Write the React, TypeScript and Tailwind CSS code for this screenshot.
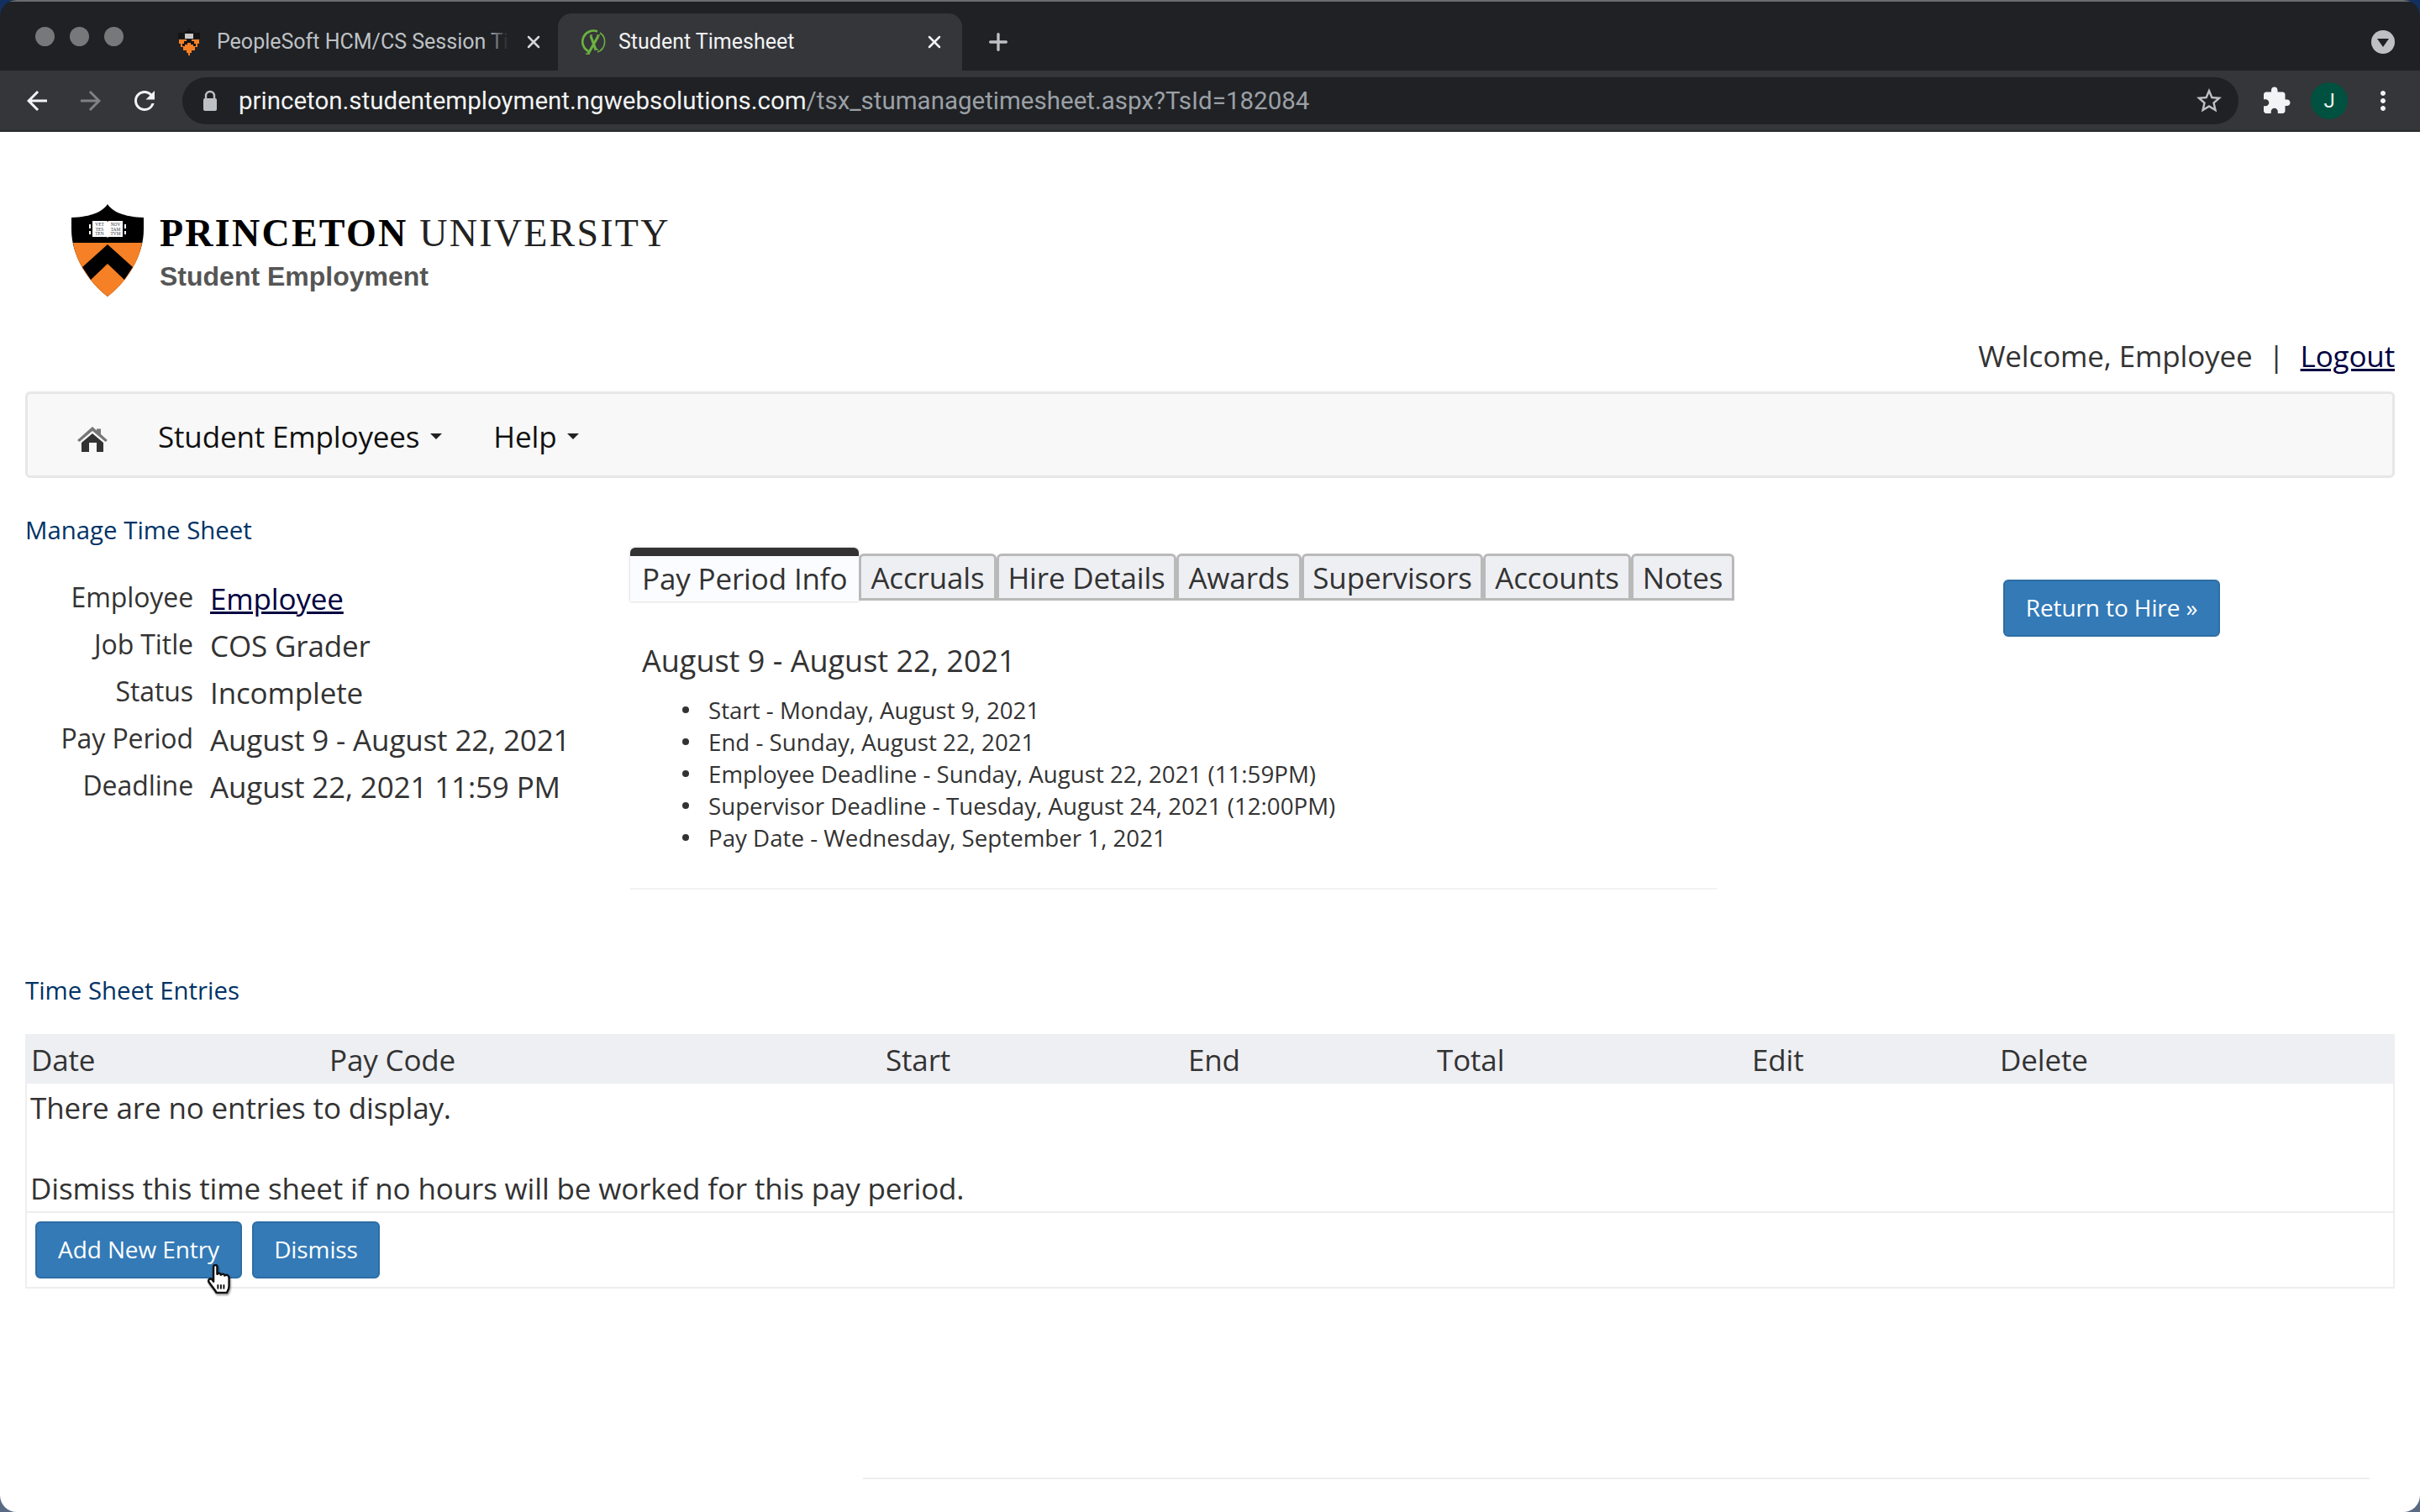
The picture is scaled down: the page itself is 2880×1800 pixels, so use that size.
import { Plus, X } from "lucide-react";

const tabs = [
  { label: "Accruals", w: "w-[164px]" },
  { label: "Hire Details", w: "w-[214px]" },
  { label: "Awards", w: "w-[149px]" },
  { label: "Supervisors", w: "w-[216px]" },
  { label: "Accounts", w: "w-[176px]" },
  { label: "Notes", w: "w-[123px]" },
];

const details = [
  ["Employee", "Employee"],
  ["Job Title", "COS Grader"],
  ["Status", "Incomplete"],
  ["Pay Period", "August 9 - August 22, 2021"],
  ["Deadline", "August 22, 2021 11:59 PM"],
];

const dates = [
  "Start - Monday, August 9, 2021",
  "End - Sunday, August 22, 2021",
  "Employee Deadline - Sunday, August 22, 2021 (11:59PM)",
  "Supervisor Deadline - Tuesday, August 24, 2021 (12:00PM)",
  "Pay Date - Wednesday, September 1, 2021",
];

const columns = [
  { label: "Date", w: "w-[355px]" },
  { label: "Pay Code", w: "w-[662px]" },
  { label: "Start", w: "w-[360px]" },
  { label: "End", w: "w-[296px]" },
  { label: "Total", w: "w-[375px]" },
  { label: "Edit", w: "w-[295px]" },
  { label: "Delete", w: "w-[300px]" },
];

const Shield = () => (
  <svg width="86" height="110" viewBox="0 0 86 110" className="shrink-0">
    <path d="M43 0 C48 8 60 15 86 16 L86 30 C86 62 66 92 43 110 C20 92 0 62 0 30 L0 16 C26 15 38 8 43 0Z" fill="#000" />
    <path d="M2 46 L84 46 C80 70 64 94 43 110 C22 94 6 70 2 46Z" fill="#f58025" />
    <path d="M43 48 L73 75 L63 90 L43 71 L23 90 L13 75Z" fill="#000" />
    <path d="M25 20 L42 20 L43 21 L44 20 L61 20 L61 39 L44 39 L43 40 L42 39 L25 39Z" fill="#fff" />
    <path d="M22 24V29M22 32V36M64 24V29M64 32V36" stroke="#fff" strokeWidth="2" />
    <text x="33.5" y="26" textAnchor="middle" fontSize="5.4" fontFamily="Liberation Serif, serif" fill="#333">VET</text>
    <text x="33.5" y="31.5" textAnchor="middle" fontSize="5.4" fontFamily="Liberation Serif, serif" fill="#333">TES</text>
    <text x="33.5" y="37" textAnchor="middle" fontSize="5.4" fontFamily="Liberation Serif, serif" fill="#333">TEN</text>
    <text x="52.5" y="26" textAnchor="middle" fontSize="5.4" fontFamily="Liberation Serif, serif" fill="#333">NOV</text>
    <text x="52.5" y="31.5" textAnchor="middle" fontSize="5.4" fontFamily="Liberation Serif, serif" fill="#333">TAM</text>
    <text x="52.5" y="37" textAnchor="middle" fontSize="5.4" fontFamily="Liberation Serif, serif" fill="#333">TVM</text>
  </svg>
);

const TimesheetFavicon = () => (
  <svg width="30" height="32" viewBox="0 0 30 32" className="shrink-0">
    <path d="M19 3.5 A13 13 0 0 0 8 27" fill="none" stroke="#6cb33f" strokeWidth="2.6" />
    <path d="M22 5 A13 13 0 0 1 19 28" fill="none" stroke="#6cb33f" strokeWidth="1.6" />
    <path d="M11 9 L17 25 M20 9 L8 30" stroke="#6cb33f" strokeWidth="3" fill="none" />
    <path d="M10 8 H13 M18 8 H22 M5 30 H10 M15 25 H20" stroke="#6cb33f" strokeWidth="1.4" />
  </svg>
);

const PeopleSoftFavicon = () => (
  <svg width="26" height="32" viewBox="0 0 26 32" className="shrink-0" shapeRendering="crispEdges">
    <path d="M12 0 H14 V3 H18 V5 H26 V12 H0 V5 H8 V3 H12Z" fill="#141414" />
    <rect x="8" y="6" width="10" height="6" fill="#c9c9c9" />
    <path d="M1 13 H25 V18 H23 V22 H20 V26 H16 V29 H14 V32 H12 V29 H10 V26 H6 V22 H3 V18 H1Z" fill="#f58025" />
    <path d="M10 13 H16 V15 H19 V18 H21 V21 H18 V19 H15 V17 H11 V19 H8 V21 H5 V18 H7 V15 H10Z" fill="#141414" />
  </svg>
);

const HomeIcon = () => (
  <svg width="36" height="30" viewBox="0 0 36 30">
    <path d="M18 0 L23 4.5 L23 2.5 L28 2.5 L28 9 L36 16 L33.5 18 L18 5 L2.5 18 L0 16Z" fill="#777" />
    <path d="M18 8 L31 19 L31 30 L23 30 L23 19 L14 19 L14 30 L5 30 L5 19Z" fill="#333" />
  </svg>
);

const HandCursor = () => (
  <svg
    width="30"
    height="36"
    viewBox="0 0 34 40"
    className="absolute left-[247px] top-[1505px] drop-shadow-[1px_2px_1px_rgba(0,0,0,0.4)]"
  >
    <path
      d="M8 3 C8 0 13 0 13 3 L13 13 C15 11 18 12 18 14 C20 12 23 13 23 15 C26 13 29 15 29 18 L29 29 C29 33 27 36 26 38 L12 38 C10 34 6 30 2 24 C0 21 3 18 6 20 L8 23Z"
      fill="#fff"
      stroke="#111"
      strokeWidth="2.8"
      strokeLinejoin="round"
    />
    <path d="M14 27 L14 33 M18 27 L18 33 M22 27 L22 33" stroke="#111" strokeWidth="2.2" />
  </svg>
);

// Material paths, the same ones the browser toolbar draws
const ToolbarIcon = ({ d, size, className }: { d: string; size: number; className: string }) => (
  <svg width={size} height={size} viewBox="0 0 24 24" fill="currentColor" className={`shrink-0 ${className}`}>
    <path d={d} />
  </svg>
);

const BlueButton = ({ children, className }: { children: React.ReactNode; className: string }) => (
  <button className={`flex h-[68px] items-center justify-center rounded-[6px] border-2 border-[#2e6da4] bg-[#337ab7] pb-[2px] text-[28px] tracking-[-0.1px] text-white ${className}`}>
    {children}
  </button>
);

const BrowserChrome = () => (
  <div className="h-[157px] overflow-hidden rounded-t-[20px] bg-[#202124] font-['Roboto',sans-serif]">
    <div className="h-[2px] bg-[#6b6c6e]" />
    <div className="flex h-[82px] items-end">
      <div className="flex h-[68px] w-[212px] items-center pb-[14px] pl-[42px]">
        <span className="size-[23px] rounded-full bg-[#77787a]" />
        <span className="ml-[18px] size-[23px] rounded-full bg-[#77787a]" />
        <span className="ml-[18px] size-[23px] rounded-full bg-[#77787a]" />
      </div>
      <div className="flex h-[68px] w-[452px] items-center text-[25px] text-[#bdc1c6]">
        <PeopleSoftFavicon />
        <span className="relative ml-[20px] w-[347px] overflow-hidden whitespace-nowrap">
          PeopleSoft HCM/CS Session Ti
          <span className="absolute inset-y-0 right-0 w-[26px] bg-linear-to-r from-transparent to-[#202124]" />
        </span>
        <X size={24} strokeWidth={2.5} className="ml-[18px] text-[#d5d7da]" />
      </div>
      <div className="flex h-[68px] w-[481px] items-center rounded-t-[16px] bg-[#35363a] pl-[28px] text-[25px] text-[#f1f3f4]">
        <TimesheetFavicon />
        <span className="ml-[14px] w-[364px]">Student Timesheet</span>
        <X size={24} strokeWidth={2.5} className="text-[#f1f3f4]" />
      </div>
      <Plus size={32} strokeWidth={2.5} className="mb-[18px] ml-[27px] text-[#bdc1c6]" />
      <div className="mb-[20px] ml-auto mr-[30px] flex size-[28px] items-center justify-center rounded-full bg-[#bdc1c6]">
        <span className="mt-[2px] size-0 border-x-[7px] border-t-[10px] border-x-transparent border-t-[#202124]" />
      </div>
    </div>
    <div className="flex h-[73px] items-center border-b-[2px] border-[#2a2b2e] bg-[#35363a]">
      <ToolbarIcon size={36} className="ml-[26px] text-[#f1f3f4]" d="M20 11H7.83l5.59-5.59L12 4l-8 8 8 8 1.41-1.41L7.83 13H20v-2z" />
      <ToolbarIcon size={36} className="ml-[28px] rotate-180 text-[#7f8184]" d="M20 11H7.83l5.59-5.59L12 4l-8 8 8 8 1.41-1.41L7.83 13H20v-2z" />
      <ToolbarIcon
        size={36}
        className="ml-[28px] text-[#f1f3f4]"
        d="M17.65 6.35A7.958 7.958 0 0 0 12 4c-4.42 0-7.99 3.58-7.99 8s3.57 8 7.99 8c3.73 0 6.84-2.55 7.73-6h-2.08A5.99 5.99 0 0 1 12 18c-3.31 0-6-2.69-6-6s2.69-6 6-6c1.66 0 3.14.69 4.22 1.78L13 11h7V4l-2.35 2.35z"
      />
      <div className="ml-[27px] flex h-[56px] w-[2447px] shrink-0 items-center rounded-full bg-[#202124] pl-[23px] pr-[17px]">
        <svg width="20" height="26" viewBox="0 0 20 26" className="shrink-0">
          <path d="M5 11 V7 A5 5 0 0 1 15 7 V11" fill="none" stroke="#bdc1c6" strokeWidth="2.4" />
          <rect x="2" y="10" width="16" height="15" rx="2" fill="#bdc1c6" />
        </svg>
        <span className="ml-[24px] mt-[2px] whitespace-nowrap text-[29.5px] text-[#f1f3f4]">
          princeton.studentemployment.ngwebsolutions.com
          <span className="text-[#9aa0a6]">/tsx_stumanagetimesheet.aspx?TsId=182084</span>
        </span>
        <ToolbarIcon
          size={36}
          className="ml-auto text-[#bdc1c6]"
          d="M22 9.24l-7.19-.62L12 2 9.19 8.63 2 9.24l5.46 4.73L5.82 21 12 17.27 18.18 21l-1.63-7.03L22 9.24zM12 15.4l-3.76 2.27 1-4.28-3.32-2.88 4.38-.38L12 6.1l1.71 4.04 4.38.38-3.32 2.88 1 4.28L12 15.4z"
        />
      </div>
      <ToolbarIcon
        size={36}
        className="ml-[27px] text-[#f1f3f4]"
        d="M20.5 11H19V7c0-1.1-.9-2-2-2h-4V3.5C13 2.12 11.88 1 10.5 1S8 2.12 8 3.5V5H4c-1.1 0-1.99.9-1.99 2v3.8H3.5c1.49 0 2.7 1.21 2.7 2.7s-1.21 2.7-2.7 2.7H2V20c0 1.1.9 2 2 2h3.8v-1.5c0-1.49 1.21-2.7 2.7-2.7 1.49 0 2.7 1.21 2.7 2.7V22H17c1.1 0 2-.9 2-2v-4h1.5c1.38 0 2.5-1.12 2.5-2.5S21.88 11 20.5 11z"
      />
      <span className="ml-[23px] flex size-[44px] shrink-0 items-center justify-center rounded-full bg-[#00513f] text-[24px] text-[#e8f0ee]">J</span>
      <ToolbarIcon
        size={36}
        className="ml-[24px] text-[#f1f3f4]"
        d="M12 8c1.1 0 2-.9 2-2s-.9-2-2-2-2 .9-2 2 .9 2 2 2zm0 2c-1.1 0-2 .9-2 2s.9 2 2 2 2-.9 2-2-.9-2-2-2zm0 6c-1.1 0-2 .9-2 2s.9 2 2 2 2-.9 2-2-.9-2-2-2z"
      />
    </div>
  </div>
);

const App = () => (
  <div className="relative h-[1800px] w-[2880px] overflow-hidden bg-linear-to-b from-[#12305f] to-[#5a6a85] font-['Open_Sans',sans-serif] text-[#333]">
    <BrowserChrome />
    <div className="h-[1643px] rounded-b-[20px] bg-white pl-[30px] pr-[30px]">
      <div className="flex h-[248px] pl-[55px] pt-[86px]">
        <Shield />
        <div className="ml-[19px] pt-[12px]">
          <div className="whitespace-nowrap font-['Liberation_Serif',serif] text-[46px] leading-[46px] tracking-[2.25px] text-black">
            <span className="font-bold">PRINCETON</span> <span className="text-[#222]">UNIVERSITY</span>
          </div>
          <div className="mt-[8px] font-['Liberation_Sans',sans-serif] text-[32px] font-bold leading-[40px] text-[#555]">Student Employment</div>
        </div>
      </div>
      <div className="flex h-[61px] items-start justify-end text-[35px] leading-[38px] tracking-[-0.15px]">
        <span>Welcome, Employee</span>
        <span className="mx-[19px]">|</span>
        <a className="text-[#000040] underline">Logout</a>
      </div>
      <div className="flex h-[103px] items-center rounded-[6px] border-[3px] border-[#e7e7e7] bg-[#f8f8f8] text-[35px] tracking-[-0.15px] text-[#111]">
        <span className="ml-[59px] mt-[10px]"><HomeIcon /></span>
        <span className="ml-[60px] mt-[5px]">Student Employees</span>
        <span className="ml-[13px] mt-[4px] size-0 border-x-[7px] border-t-[7px] border-x-transparent border-t-[#222]" />
        <span className="ml-[61px] mt-[5px]">Help</span>
        <span className="ml-[13px] mt-[4px] size-0 border-x-[7px] border-t-[7px] border-x-transparent border-t-[#222]" />
      </div>

      <div className="relative flex h-[591px] pt-[43px]">
        <div className="w-[720px] shrink-0">
          <div className="text-[29.4px] leading-[38px] text-[#036]">Manage Time Sheet</div>
          <div className="mt-[38px] flex flex-col">
            {details.map(([label, value], i) => (
              <div key={label} className="flex h-[56px] items-start">
                <span className="w-[200px] text-right text-[32px] leading-[45px] tracking-[-0.1px]">{label}</span>
                <span className={`ml-[20px] whitespace-nowrap text-[35px] leading-[50px] tracking-[-0.15px] ${i === 0 ? "text-[#000040] underline" : ""}`}>{value}</span>
              </div>
            ))}
          </div>
        </div>
        <div className="mt-[40px] w-[1293px] shrink-0">
          <div className="flex h-[64px] items-end whitespace-nowrap text-[35px] leading-[50px] tracking-[-0.15px]">
            <div className="h-[64px] w-[272px] shrink-0 rounded-t-[6px] border-t-[10px] border-[#333] bg-[#fbfcff] px-[14px] pt-[2px] shadow-[0_0_3px_rgba(0,0,0,0.25)]">
              Pay Period Info
            </div>
            {tabs.map((t) => (
              <div key={t.label} className={`mb-px flex h-[56px] shrink-0 items-center justify-center rounded-t-[6px] border-[3px] border-[#b9b9b9] bg-[#eeeff3] pt-[2px] ${t.w}`}>
                {t.label}
              </div>
            ))}
          </div>
          <div className="pl-[14px] pt-[43px] text-[36px] leading-[56px]">August 9 - August 22, 2021</div>
          <ul className="ml-[62px] mt-[11px] text-[27.7px] leading-[38px]">
            {dates.map((d) => (
              <li key={d} className="flex items-center">
                <span className="mr-[23px] size-[8px] rounded-full bg-[#333]" />
                {d}
              </li>
            ))}
          </ul>
          <div className="mt-[41px] h-[2px] bg-[#f2f2f2]" />
        </div>
        <div className="pl-[341px] pt-[78px]">
          <BlueButton className="w-[258px]">Return to Hire »</BlueButton>
        </div>
      </div>

      <div className="text-[29.4px] leading-[38px] text-[#036]">Time Sheet Entries</div>
      <div className="mt-[33px] flex h-[59px] items-center bg-[#eeeff3] pl-[7px] pt-[3px] text-[35px] tracking-[-0.15px]">
        {columns.map((c) => (
          <span key={c.label} className={c.w}>{c.label}</span>
        ))}
      </div>
      <div className="border-x-2 border-b-2 border-[#eee]">
        <div className="h-[154px] border-b-2 border-[#eee] pl-[4px] text-[35px] leading-[52px] tracking-[-0.15px]">
          <div className="pt-[3px]">There are no entries to display.</div>
          <div className="mt-[44px]">Dismiss this time sheet if no hours will be worked for this pay period.</div>
        </div>
        <div className="flex h-[88px] gap-[12px] pl-[10px] pt-[10px]">
          <BlueButton className="w-[246px]">Add New Entry</BlueButton>
          <BlueButton className="w-[152px]">Dismiss</BlueButton>
        </div>
      </div>
      <div className="ml-[997px] mr-[30px] mt-[225px] h-[2px] bg-[#eee]" />
    </div>
    <HandCursor />
  </div>
);

export default App;
